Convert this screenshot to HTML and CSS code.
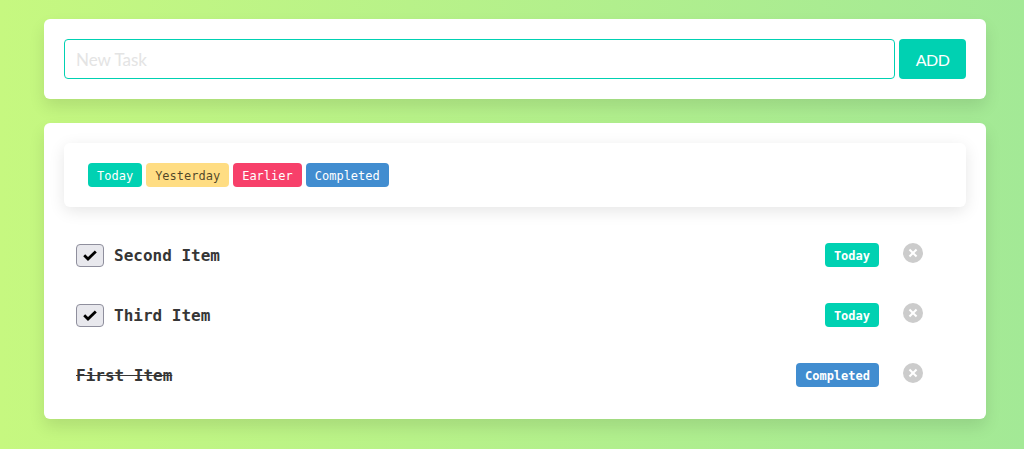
FILE: index.html

```html
<!DOCTYPE html>
<html lang="en">
<head>
    <meta charset="UTF-8">
    <meta name="viewport" content="width=device-width, initial-scale=1.0">
    <title>Todo</title>
    <link rel="stylesheet" href="styles.css">
</head>
<body>
    <div class="box add-box">
        <input class="task-input" type="text" placeholder="New Task">
        <button class="add-btn">ADD</button>
    </div>

    <div class="box list-box">
        <div class="filters">
            <span class="tag today">Today</span>
            <span class="tag yesterday">Yesterday</span>
            <span class="tag earlier">Earlier</span>
            <span class="tag completed">Completed</span>
        </div>

        <div class="item">
            <span class="check">
                <svg width="14" height="11" viewBox="0 0 14 11"><path d="M1.2 5.3 5 9 12.8 1.4" fill="none" stroke="#000" stroke-width="2.8"/></svg>
            </span>
            <span class="item-name">Second Item</span>
            <span class="tag today bold">Today</span>
            <button class="delete"></button>
        </div>
        <div class="item">
            <span class="check">
                <svg width="14" height="11" viewBox="0 0 14 11"><path d="M1.2 5.3 5 9 12.8 1.4" fill="none" stroke="#000" stroke-width="2.8"/></svg>
            </span>
            <span class="item-name">Third Item</span>
            <span class="tag today bold">Today</span>
            <button class="delete"></button>
        </div>
        <div class="item">
            <span class="item-name done">First Item</span>
            <span class="tag completed bold">Completed</span>
            <button class="delete"></button>
        </div>
    </div>
</body>
</html>
```

FILE: styles.css

```css
* { box-sizing: border-box; }
body {
    margin: 0; height: 449px; padding: 19px 38px 0 44px; overflow: hidden;
    background: linear-gradient(to right, #c6f880, #a3e996);
    font-family: Lato, sans-serif; color: #363636;
}
.box { background: #fff; border-radius: 6px; padding: 20px; box-shadow: 0 8px 16px rgba(10, 10, 10, 0.1); }
.add-box { display: flex; gap: 4px; height: 80px; margin-bottom: 24px; }
.task-input {
    flex: 1; height: 40px; padding: 0 11px; border: 1px solid #00d1b2; border-radius: 4px;
    font-family: inherit; font-size: 17px; outline: none;
}
.task-input::placeholder { color: #e4e4e4; opacity: 1; }
.add-btn {
    width: 67px; height: 40px; border: none; border-radius: 4px; padding: 0;
    background: #00d1b2; color: #fff; font-family: inherit; font-size: 16px; letter-spacing: -0.5px;
}
.list-box { height: 296px; }
.filters {
    display: flex; gap: 4px; height: 64px; padding: 20px 24px; margin-bottom: 18px;
    border-radius: 6px; box-shadow: 0 4px 16px rgba(10, 10, 10, 0.1);
}
.tag {
    display: inline-flex; align-items: center; height: 24px; padding: 1px 9px 0; border-radius: 4px;
    font-family: "DejaVu Sans Mono", monospace; font-size: 12px;
}
.today { background: #00d1b2; color: #fff; }
.yesterday { background: #ffdd83; color: rgba(0, 0, 0, 0.7); }
.earlier { background: #f7406a; color: #fff; }
.completed { background: #418dd0; color: #fff; }
.bold { font-weight: bold; }
.item { display: flex; align-items: center; height: 60px; padding: 0 12px; }
.check {
    display: flex; align-items: center; justify-content: center; width: 28px; height: 23px; margin-right: 10px;
    background: #e8e8ed; border: 1px solid #8f8f9d; border-radius: 4px;
}
.item-name { flex: 1; font-family: "DejaVu Sans Mono", monospace; font-weight: bold; font-size: 16px; }
.done { text-decoration: line-through; }
.delete {
    position: relative; align-self: flex-start; width: 20px; height: 20px; margin: 18px 31px 0 24px; padding: 0;
    border: none; border-radius: 50%; background: #cccccc;
}
.delete::before, .delete::after {
    content: ""; position: absolute; top: 50%; left: 50%; width: 10px; height: 2px; background: #fff;
    transform: translate(-50%, -50%) rotate(45deg);
}
.delete::after { transform: translate(-50%, -50%) rotate(-45deg); }
```
